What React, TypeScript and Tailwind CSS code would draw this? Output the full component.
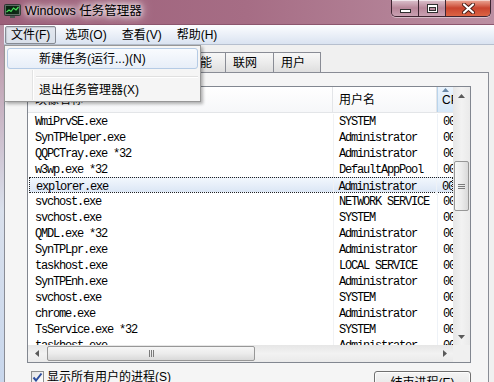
const processes: [string, string][] = [
  ['WmiPrvSE.exe', 'SYSTEM'],
  ['SynTPHelper.exe', 'Administrator'],
  ['QQPCTray.exe *32', 'Administrator'],
  ['w3wp.exe *32', 'DefaultAppPool'],
  ['explorer.exe', 'Administrator'],
  ['svchost.exe', 'NETWORK SERVICE'],
  ['svchost.exe', 'SYSTEM'],
  ['QMDL.exe *32', 'Administrator'],
  ['SynTPLpr.exe', 'Administrator'],
  ['taskhost.exe', 'LOCAL SERVICE'],
  ['SynTPEnh.exe', 'Administrator'],
  ['svchost.exe', 'SYSTEM'],
  ['chrome.exe', 'Administrator'],
  ['TsService.exe *32', 'SYSTEM'],
  ['taskhost.exe', 'Administrator'],
]

function TaskIcon() {
  return (
    <svg width="17" height="15" viewBox="0 0 17 15" className="ml-[4px] mt-[4px] shrink-0">
      <rect x="0.5" y="0.5" width="16" height="11" rx="1" fill="#5d6b63" stroke="#2b3530" />
      <rect x="2" y="2" width="13" height="8" fill="#0b2612" />
      <polyline points="2.5,8 5,6 7,7.5 9.5,4 12,6 14.5,3" fill="none" stroke="#46e35a" strokeWidth="1.2" />
      <rect x="6" y="12" width="5" height="2" fill="#4b5550" />
    </svg>
  )
}

function WindowButtons() {
  return (
    <div className="ml-auto mr-[3px] flex h-[17px] overflow-hidden rounded-b-[5px] border border-t-0 border-[#3e2531] shadow-[0_1px_0_rgba(255,255,255,0.45)]">
      <div className="flex w-[27px] items-end justify-center border-r border-[#3e2531] bg-gradient-to-b from-[#dcc3ce] via-[#b78699] to-[#caa1b2] pb-[3px] shadow-[inset_0_1px_0_rgba(255,255,255,0.6)]">
        <span className="h-[4px] w-[11px] border border-[#2f2f2f] bg-white" />
      </div>
      <div className="flex w-[27px] items-center justify-center border-r border-[#3e2531] bg-gradient-to-b from-[#dcc3ce] via-[#b78699] to-[#caa1b2] shadow-[inset_0_1px_0_rgba(255,255,255,0.6)]">
        <span className="h-[9px] w-[11px] border border-[#2f2f2f] bg-white p-[1px] pt-[2px]">
          <span className="block h-full w-full border border-[#2f2f2f] bg-[#b98a9d]" />
        </span>
      </div>
      <div className="flex w-[44px] items-center justify-center bg-gradient-to-b from-[#eba898] via-[#c9442e] to-[#dc6444] shadow-[inset_0_1px_0_rgba(255,255,255,0.5)]">
        <svg width="13" height="11" viewBox="0 0 13 11">
          <path d="M2 1.5 L11 9.5 M11 1.5 L2 9.5" stroke="#4a1d16" strokeWidth="4" strokeLinecap="round" />
          <path d="M2 1.5 L11 9.5 M11 1.5 L2 9.5" stroke="#ffffff" strokeWidth="2.2" strokeLinecap="round" />
        </svg>
      </div>
    </div>
  )
}

function Arrow({ dir }: { dir: 'up' | 'down' | 'left' | 'right' }) {
  const pts = {
    up: '0,4 3.5,0 7,4',
    down: '0,0 3.5,4 7,0',
    left: '4,0 0,3.5 4,7',
    right: '0,0 4,3.5 0,7',
  }[dir]
  const vertical = dir === 'up' || dir === 'down'
  return (
    <svg width={vertical ? 7 : 4} height={vertical ? 4 : 7}>
      <polygon points={pts} fill="#5a5a5a" />
    </svg>
  )
}

function Tab({ label, className }: { label: string; className: string }) {
  return (
    <div
      className={`flex h-[20px] items-center border-t border-r border-[#898c95] bg-gradient-to-b from-[#f7f7f7] via-[#ececec] to-[#dedede] text-[12px] ${className}`}
    >
      {label}
    </div>
  )
}

export default function App() {
  return (
    <div className="relative flex h-[382px] w-[494px] flex-col overflow-hidden bg-[#f0f0f0] font-['Liberation_Sans','Noto_Sans_CJK_SC',sans-serif] text-black">
      {/* title bar */}
      <div className="flex h-[25px] shrink-0 items-start border-b border-[#8c566e] bg-gradient-to-r from-[#9c5f79] via-[#a66d85] to-[#bb8fa2]">
        <TaskIcon />
        <span className="ml-[4px] mt-[3px] text-[12.5px] leading-[17px] [text-shadow:0_0_5px_#fff,0_0_9px_#fff,0_0_13px_rgba(255,255,255,0.9)]">
          Windows 任务管理器
        </span>
        <WindowButtons />
      </div>

      <div className="flex flex-1">
        <div className="w-[4px] shrink-0 bg-gradient-to-b from-[#b88fa1] via-[#d9e0ec] to-[#c7d6ec]" />

        <div className="flex flex-1 flex-col">
          {/* menu bar */}
          <div className="flex h-[20px] shrink-0 items-center gap-[3px] border-b border-[#b6bfce] bg-gradient-to-b from-[#fcfdff] to-[#dae3f1] pl-[1px] text-[12px]">
            <div className="flex h-[18px] items-center rounded-[2px] border border-[#868b94] bg-gradient-to-b from-[#e3e8ef] to-[#d9e0ea] px-[5px] shadow-[inset_1px_1px_1px_rgba(0,0,0,0.12)]">
              文件(F)
            </div>
            <div className="px-[6px]">选项(O)</div>
            <div className="px-[6px]">查看(V)</div>
            <div className="px-[6px]">帮助(H)</div>
          </div>

          <div className="flex flex-1 flex-col pt-[7px]">
            {/* tabs */}
            <div className="ml-[6px] flex h-[20px] shrink-0 items-end">
              <Tab label="应用程序" className="w-[70px] border-l pl-[9px]" />
              <Tab label="进程" className="w-[50px] pl-[12px]" />
              <Tab label="服务" className="w-[48px] pl-[10px]" />
              <Tab label="性能" className="w-[48px] pl-[10px]" />
              <Tab label="联网" className="w-[48px] pl-[7px]" />
              <Tab label="用户" className="w-[47px] pl-[7px]" />
            </div>

            {/* tab panel */}
            <div className="mr-[5px] flex-1 border-t border-r border-l border-[#898c95] bg-[#f5f5f5] pl-[22px] pt-[13px]">
              <div className="w-[444px]">
                {/* list view */}
                <div className="flex h-[277px] flex-col border border-[#828790] bg-white">
                  <div className="flex h-[258px]">
                    <div className="flex w-[425px] flex-col overflow-hidden">
                      <div className="flex h-[26px] shrink-0 border-b border-[#e3e5e8] bg-gradient-to-b from-white to-[#f6f7f9] text-[12px]">
                        <div className="flex w-[305px] items-center border-r border-[#e3e5e8] pl-[7px]">映像名称</div>
                        <div className="flex w-[104px] items-center border-r border-[#e3e5e8] pl-[6px]">用户名</div>
                        <div className="relative flex w-[16px] items-center overflow-hidden whitespace-nowrap border-l border-[#b9d4ec] bg-gradient-to-b from-[#ebf4fd] to-[#d6e8f8] pl-[4px]">
                          CPU
                          <svg width="7" height="4" className="absolute left-[4px] top-[1px]">
                            <polygon points="0,4 3.5,0 7,4" fill="#6c8aa8" />
                          </svg>
                        </div>
                      </div>
                      {processes.map(([name, user], i) => (
                        <div
                          key={i}
                          className={`flex h-[16px] shrink-0 items-start whitespace-nowrap pt-[1px] font-['Liberation_Mono',monospace] text-[12px] leading-[16px] tracking-[-1.2px] ${
                            i === 4
                              ? 'ml-[1px] border border-dotted border-[#222] bg-gradient-to-b from-[#f2f7fd] to-[#dbe6f5] pt-0'
                              : ''
                          }`}
                        >
                          <div className={`${i === 4 ? 'w-[304px] pl-[6px]' : 'w-[305px] pl-[7px]'}`}>{name}</div>
                          <div className="w-[104px] border-l border-[#f1f2f4] pl-[5px]">{user}</div>
                          <div className="w-[16px] overflow-hidden border-l border-[#eef2f7] pl-[5px]">00</div>
                        </div>
                      ))}
                    </div>

                    {/* vertical scrollbar */}
                    <div className="flex w-[17px] flex-col bg-gradient-to-r from-[#e6e6e6] via-[#f2f2f2] to-[#eaeaea]">
                      <div className="flex h-[17px] items-center justify-center">
                        <Arrow dir="up" />
                      </div>
                      <div className="mx-[1px] mt-[57px] flex h-[50px] items-center justify-center rounded-[2px] border border-[#979797] bg-gradient-to-r from-[#f6f6f6] via-[#ececec] to-[#d9d9d9]">
                        <div className="flex flex-col gap-[1px]">
                          <span className="h-[1px] w-[7px] bg-[#7a7a7a]" />
                          <span className="h-[1px] w-[7px] bg-[#7a7a7a]" />
                          <span className="h-[1px] w-[7px] bg-[#7a7a7a]" />
                        </div>
                      </div>
                      <div className="flex-1" />
                      <div className="flex h-[17px] items-center justify-center">
                        <Arrow dir="down" />
                      </div>
                    </div>
                  </div>

                  <div className="flex h-[17px]">
                    {/* horizontal scrollbar */}
                    <div className="flex w-[425px] items-center bg-gradient-to-b from-[#e6e6e6] via-[#f2f2f2] to-[#eaeaea]">
                      <div className="flex h-[17px] w-[17px] items-center justify-center">
                        <Arrow dir="left" />
                      </div>
                      <div className="ml-[2px] flex h-[15px] w-[208px] items-center justify-center rounded-[2px] border border-[#979797] bg-gradient-to-b from-[#f6f6f6] via-[#ececec] to-[#d9d9d9]">
                        <div className="flex gap-[1px]">
                          <span className="h-[7px] w-[1px] bg-[#7a7a7a]" />
                          <span className="h-[7px] w-[1px] bg-[#7a7a7a]" />
                          <span className="h-[7px] w-[1px] bg-[#7a7a7a]" />
                        </div>
                      </div>
                      <div className="flex-1" />
                      <div className="flex h-[17px] w-[17px] items-center justify-center">
                        <Arrow dir="right" />
                      </div>
                    </div>
                    <div className="w-[17px] bg-[#f0f0f0]" />
                  </div>
                </div>

                {/* bottom row */}
                <div className="mt-[7px] flex items-start">
                  <div className="ml-[4px] flex items-center gap-[3px] text-[12px]">
                    <div className="flex h-[13px] w-[13px] items-center justify-center border border-[#8e8f8f] bg-gradient-to-br from-[#e4e4e4] to-white">
                      <svg width="11" height="10" viewBox="0 0 11 10">
                        <path d="M1.5 5.5 L4 8.5 L9.5 1.5" fill="none" stroke="#2d4e9e" strokeWidth="2" />
                      </svg>
                    </div>
                    <span className="leading-[14px]">显示所有用户的进程(S)</span>
                  </div>
                  <div className="ml-auto mt-[1px] flex h-[23px] w-[97px] items-center justify-center rounded-[3px] border border-[#707070] bg-gradient-to-b from-[#f4f4f4] via-[#ebebeb] to-[#dadada] text-[12px] shadow-[inset_0_0_0_1px_rgba(255,255,255,0.8)]">
                    结束进程(E)
                  </div>
                </div>
              </div>
            </div>
          </div>
        </div>
      </div>

      {/* open file menu */}
      <div className="absolute left-[4px] top-[45px] h-[57px] w-[197px] border border-[#979797] bg-[#f5f5f5] p-[2px] pb-[1px] text-[12px] shadow-[2px_2px_3px_rgba(0,0,0,0.3)]">
        <div className="absolute bottom-[1px] left-[27px] top-[24px] w-[1px] bg-[#e2e3e3]" />
        <div className="absolute bottom-[1px] left-[28px] top-[24px] w-[1px] bg-white" />
        <div className="relative flex h-[21px] items-center rounded-[3px] border border-[#b5cbe5] bg-gradient-to-b from-[#f9fbfe] to-[#e7eef8] pl-[31px]">
          新建任务(运行...)(N)
        </div>
        <div className="relative ml-[29px] h-[11px] pt-[7px]">
          <div className="h-[1px] bg-[#e0e0e0]" />
          <div className="h-[1px] bg-white" />
        </div>
        <div className="relative flex h-[20px] items-center pl-[32px]">退出任务管理器(X)</div>
      </div>
    </div>
  )
}
